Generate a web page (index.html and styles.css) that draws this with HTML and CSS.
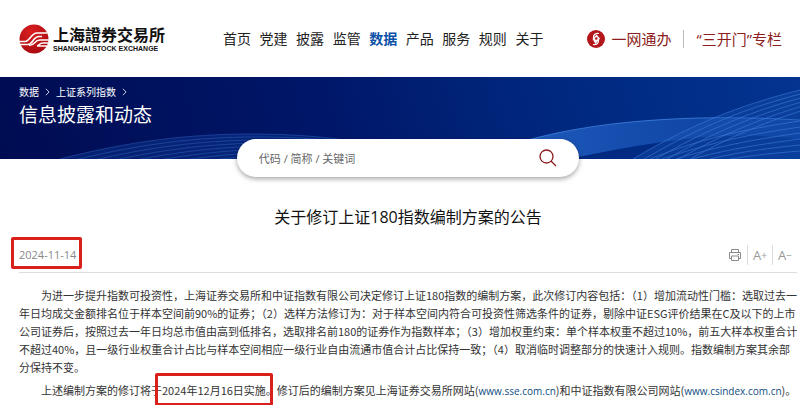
FILE: index.html
```html
<!DOCTYPE html>
<html lang="zh-CN">
<head>
  <meta charset="UTF-8" />
  <meta name="viewport" content="width=device-width, initial-scale=1" />
  <title>关于修订上证180指数编制方案的公告</title>
  <link rel="stylesheet" href="styles.css">
</head>
<body>
<header class="header">
  <a class="logo" href="#">
    <svg class="logo-mark" viewBox="0 0 30 30" aria-hidden="true">
      <defs>
        <radialGradient id="ball" cx="0.4" cy="0.25" r="0.8">
          <stop offset="0" stop-color="#d81f20" />
          <stop offset="1" stop-color="#a80a10" />
        </radialGradient>
      </defs>
      <circle cx="15" cy="15" r="14.5" fill="url(#ball)" />
      <g fill="none" stroke="#fff" stroke-width="1.6">
        <path d="M0 17.5H6C11 17.5 12 9 18 9H28" />
        <path d="M1 20.500H9C14 20.500 14 12.500 20 12.500H23" />
        <path d="M10 21.500C17 21 15 16 21 16H30" />
        <path d="M18 22C21 21 20 19 24 19H30M19 22H28" />
      </g>
    </svg>
    <span class="logo-text">
      <span class="logo-cn" lang="zh-TW">上海證券交易所</span>
      <span class="logo-en">SHANGHAI STOCK EXCHANGE</span>
    </span>
  </a>
  <nav class="nav" aria-label="主导航">
    <a href="#">首页</a>
    <a href="#">党建</a>
    <a href="#">披露</a>
    <a href="#">监管</a>
    <a class="active" href="#">数据</a>
    <a href="#">产品</a>
    <a href="#">服务</a>
    <a href="#">规则</a>
    <a href="#">关于</a>
  </nav>
  <div class="links">
    <a class="service" href="#">
      <svg class="service-icon" viewBox="0 0 18 18" aria-hidden="true">
        <circle cx="9" cy="9" r="9" fill="#b3161b" />
        <path d="M9.500 4.500L13 8.500L8.500 14L5.500 9Z" fill="#fff" />
        <path d="M6.500 8C6 5 8 3 12 3.500M11.500 9.500C12 13 10 15 6 14.500" fill="none" stroke="#fff" stroke-width="1.200" />
        <circle cx="9.300" cy="8.500" r="1.300" fill="#b3161b" />
      </svg>
      一网通办
    </a>
    <a class="column" href="#">“三开门”专栏</a>
  </div>
</header>

<section class="banner">
  <svg class="waves" viewBox="0 0 800 82" preserveAspectRatio="none" aria-hidden="true">
    <defs>
      <path id="arc" d="M60 82C130 64 190 57 250 57S350 62 420 76" />
      <path id="fan" d="M633 82C690 48 740 28 800 13" />
      <linearGradient id="glow" x1="0" x2="1" y1="0" y2="0">
        <stop offset="0" stop-color="#2a6fd6" stop-opacity="0.7" />
        <stop offset="1" stop-color="#1f60c8" stop-opacity="0.3" />
      </linearGradient>
    </defs>
    <path d="M60 82C130 64 190 57 250 57S350 62 420 76V82Z" fill="#0f3f9c" opacity="0.4" />
    <g fill="none" stroke="#3a70cf" stroke-width="0.700" opacity="0.6">
      <use href="#arc" />
      <use href="#arc" x="7" y="3" />
      <use href="#arc" x="14" y="6" />
      <use href="#arc" x="21" y="9" />
      <use href="#arc" x="28" y="12" />
      <use href="#arc" x="35" y="15" />
      <use href="#arc" x="42" y="18" />
      <use href="#arc" x="49" y="21" />
    </g>
    <path d="M528 63C590 46 680 36 800 43V62C720 52 650 66 578 80L528 82Z" fill="url(#glow)" />
    <path d="M528 63C590 46 680 36 800 43" fill="none" stroke="#3f83e0" stroke-width="0.800" />
    <path d="M633 82C690 48 740 28 800 13V82Z" fill="#1a55b5" opacity="0.35" />
    <g fill="none" stroke="#4a88e6" stroke-width="0.700" opacity="0.7">
      <use href="#fan" />
      <use href="#fan" x="8" y="2" />
      <use href="#fan" x="16" y="4" />
      <use href="#fan" x="24" y="6" />
      <use href="#fan" x="32" y="8" />
      <use href="#fan" x="40" y="10" />
      <path d="M650 82C700 62 740 53 800 44M662 82C710 66 745 58 800 50M676 82C715 70 750 63 800 56M692 82C725 73 755 68 800 62M710 82C735 76 760 72 800 68M730 82C755 78 775 76 800 74" />
    </g>
  </svg>
  <nav class="crumbs" aria-label="当前位置">
    <a href="#">数据</a>
    <svg class="chevron" viewBox="0 0 6 10" aria-hidden="true"><path d="M1 1L5 5L1 9" /></svg>
    <a href="#">上证系列指数</a>
    <svg class="chevron" viewBox="0 0 6 10" aria-hidden="true"><path d="M1 1L5 5L1 9" /></svg>
  </nav>
  <h2 class="banner-title">信息披露和动态</h2>
</section>

<main class="content">
  <form class="search" role="search">
    <input class="search-input" type="text" placeholder="代码 / 简称 / 关键词" aria-label="代码 / 简称 / 关键词" />
    <button class="search-button" type="button" aria-label="搜索">
      <svg viewBox="0 0 18 18" aria-hidden="true"><circle cx="7.500" cy="7.500" r="6.500" /><path d="M12 12L17 17" /></svg>
    </button>
  </form>

  <article>
    <h1 class="title">关于修订上证180指数编制方案的公告</h1>
    <div class="meta">
      <time class="date marked" datetime="2024-11-14">2024-11-14</time>
      <div class="tools">
        <button type="button" aria-label="打印">
          <svg class="print" viewBox="0 0 14 14" aria-hidden="true"><path d="M3.500 4V1.500H10.500V4M3.500 10.500H1.500V4.500H12.500V10.500H10.500M3.500 8H10.500V12.500H3.500ZM9.500 6.500H11" /></svg>
        </button>
        <button type="button" aria-label="放大字体">A<span class="sign">+</span></button>
        <button type="button" aria-label="缩小字体">A<span class="sign">−</span></button>
      </div>
    </div>
    <div class="text">
      <p>为进一步提升指数可投资性，上海证券交易所和中证指数有限公司决定修订上证180指数的编制方案，此次修订内容包括：（1）增加流动性门槛：选取过去一年日均成交金额排名位于样本空间前90%的证券；（2）选样方法修订为：对于样本空间内符合可投资性筛选条件的证券，剔除中证ESG评价结果在C及以下的上市公司证券后，按照过去一年日均总市值由高到低排名，选取排名前180的证券作为指数样本；（3）增加权重约束：单个样本权重不超过10%，前五大样本权重合计不超过40%，且一级行业权重合计占比与样本空间相应一级行业自由流通市值合计占比保持一致；（4）取消临时调整部分的快速计入规则。指数编制方案其余部分保持不变。</p>
      <p>上述编制方案的修订将于<span class="marked">2024年12月16日实施。</span>修订后的编制方案见上海证券交易所网站(<a href="#">www.sse.com.cn</a>)和中证指数有限公司网站(<a href="#">www.csindex.com.cn</a>)。</p>
    </div>
  </article>
</main>
</body>
</html>
```
FILE: styles.css
```css
* {
  box-sizing: border-box;
}
body {
  margin: 0;
  background: white;
  color: #333;
  font-family: "Open Sans", "Noto Sans CJK SC", sans-serif;
  font-size: 11px;
}
a {
  color: inherit;
  text-decoration: none;
}
button {
  margin: 0;
  padding: 0;
  border: 0;
  background: none;
  font-family: inherit;
  cursor: pointer;
}
.header {
  display: flex;
  align-items: center;
  height: 77px;
  padding: 0 18px 0 19px;
}
.logo {
  display: flex;
  align-items: center;
  gap: 4px;
  color: #111;
}
.logo-mark {
  width: 30px;
  height: 30px;
}
.logo-text {
  display: flex;
  flex-direction: column;
  gap: 2px;
  white-space: nowrap;
}
.logo-cn {
  font-family: "Noto Sans CJK TC", sans-serif;
  font-size: 16px;
  font-weight: 700;
  line-height: 18px;
}
.logo-en {
  font-family: "Liberation Sans", sans-serif;
  font-size: 7px;
  font-weight: 700;
  line-height: 8px;
}
.nav {
  display: flex;
  flex: none;
  justify-content: space-between;
  width: 42%;
  margin-left: 58px;
  color: #222;
  font-size: 14px;
  line-height: 18px;
  white-space: nowrap;
}
.nav .active {
  color: #0b51a8;
  font-weight: 700;
}
.links {
  display: flex;
  align-items: center;
  margin-left: auto;
  color: #8c1d20;
  font-size: 15px;
  line-height: 18px;
  white-space: nowrap;
}
.service {
  display: flex;
  align-items: center;
  gap: 7px;
}
.service-icon {
  width: 18px;
  height: 18px;
}
.column {
  margin-left: 11px;
  padding-left: 13px;
  border-left: 1px solid #bbb;
}
.banner {
  position: relative;
  height: 82px;
  padding: 7px 19px;
  background: linear-gradient(75deg, #000c52 0%, #001668 40%, #00267c 65%, #023490 100%);
  color: white;
}
.waves {
  position: absolute;
  top: 0;
  left: 0;
  width: 100%;
  height: 100%;
}
.crumbs {
  position: relative;
  display: flex;
  align-items: center;
  gap: 6px;
  font-size: 10px;
  line-height: 16px;
}
.chevron {
  width: 5px;
  height: 8px;
  fill: none;
  stroke: white;
}
.banner-title {
  position: relative;
  margin: 2px 0 0;
  font-size: 19px;
  font-weight: 400;
  line-height: 26px;
}
.content {
  padding: 0 3px 0 19px;
}
.search {
  position: relative;
  display: flex;
  align-items: center;
  width: 44%;
  height: 38px;
  margin: -20px auto 0;
  padding: 0 22px;
  border-radius: 19px;
  background: white;
  box-shadow: 0 2px 5px rgba(0, 0, 0, 0.35);
}
.search-input {
  flex: 1;
  min-width: 0;
  padding: 0;
  border: 0;
  outline: 0;
  background: none;
  color: #333;
  font-family: inherit;
  font-size: 11px;
}
.search-input::placeholder {
  color: #666;
}
.search-button svg {
  display: block;
  width: 18px;
  height: 18px;
  fill: none;
  stroke: #8c1d20;
  stroke-width: 1.3;
}
.title {
  margin: 28px 0 0;
  color: #111;
  font-size: 16px;
  font-weight: 400;
  line-height: 24px;
  text-align: center;
}
.meta {
  display: flex;
  align-items: center;
  justify-content: space-between;
  height: 36px;
  margin-top: 8px;
  border-bottom: 1px solid #ddd;
}
.date {
  color: #888;
  font-size: 11px;
  line-height: 16px;
}
.tools {
  display: flex;
}
.tools button {
  display: flex;
  align-items: center;
  justify-content: center;
  width: 25px;
  height: 20px;
  color: #999;
  font-size: 13px;
}
.tools button + button {
  border-left: 1px solid #ddd;
}
.sign {
  font-size: 10px;
}
.print {
  width: 14px;
  height: 14px;
  fill: none;
  stroke: #888;
}
.marked {
  position: relative;
}
.marked::after {
  content: "";
  position: absolute;
  inset: -9px 4px -8px -7px;
  border: 3px solid #d9201a;
  border-radius: 2px;
}
.date.marked::after {
  inset: -10px -6px -6px -8px;
}
.text {
  margin-right: -3px;
  padding-top: 13px;
  font-family: "Noto Sans CJK SC", sans-serif;
  line-height: 18px;
}
.text p {
  margin: 0 0 5px;
  text-indent: 22px;
}
.text a {
  color: #0f4c81;
  font-family: "Open Sans", sans-serif;
  font-size: 10px;
  font-weight: 500;
}
```
